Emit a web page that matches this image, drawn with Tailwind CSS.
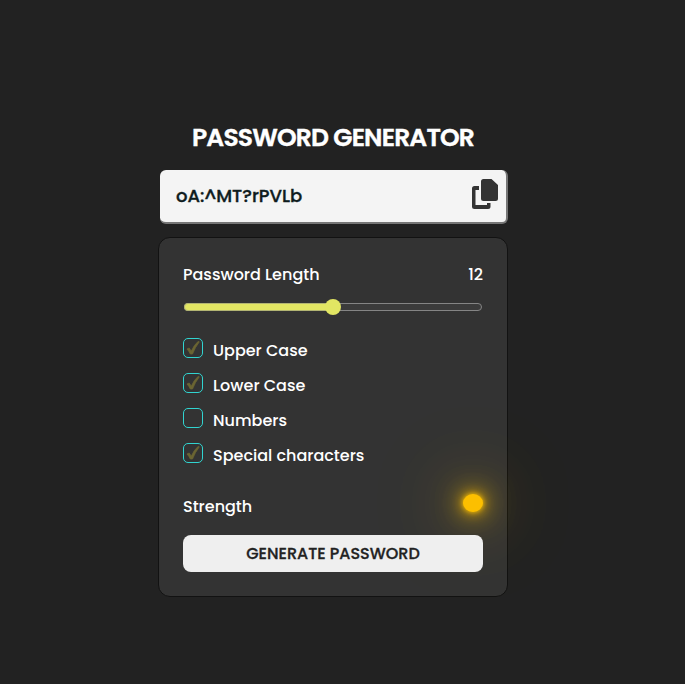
<!DOCTYPE html>
<html lang="en">
<head>
<meta charset="utf-8">
<title>Password Generator</title>
<script src="https://cdn.jsdelivr.net/npm/@tailwindcss/browser@4"></script>
</head>
<body class="h-[684px] overflow-hidden bg-[#222222] font-[Poppins,Inter,sans-serif] text-base font-medium text-white">
<main class="ml-[158px] flex w-[350px] flex-col pt-[120px]">
  <h1 class="h-9 text-center text-[25px] leading-9 font-semibold tracking-[-0.82px] whitespace-nowrap [-webkit-text-stroke:0.4px_white]">PASSWORD GENERATOR</h1>
  <div class="mt-[14px] ml-0.5 flex h-[54px] w-[348px] justify-between rounded-md border-r-2 border-b-2 border-[#767676] bg-[#f4f4f4] pr-2 pl-4 text-[#0f1c1e]">
    <span class="text-[18px] leading-[52px] font-medium [-webkit-text-stroke:0.35px_#0f1c1e]">oA:^MT?rPVLb</span>
    <svg class="mt-[9px] h-[30px] w-[27px]" viewBox="0 0 27 30" fill="#333333"><path d="M12 0H20.5L27 6V19.5Q27 22 24.5 22H12.5Q10 22 10 19.5V2.5Q10 0 12.5 0Z"/><path d="M8 7H3.5Q1 7 1 9.5V27.5Q1 30 3.5 30H17Q19.5 30 19.5 27.5V24H16V26H4.5V11H8Z"/></svg>
  </div>
  <section class="mt-[13px] h-[360px] rounded-xl border border-[#121212] bg-[#333333] px-6 pt-6">
    <div class="flex h-6 justify-between leading-[26px]"><span>Password Length</span><span>12</span></div>
    <div class="mt-[13px] flex h-4 items-center px-px">
      <div class="relative h-2 w-[298px] rounded-full border border-[#858585] bg-[#3b3b3b]">
        <div class="-mt-px -ml-px h-2 w-[149px] rounded-l-full border border-r-0 border-[#b3b573] bg-[#e2e663]"></div>
        <div class="absolute top-[-5px] left-[140px] size-4 rounded-full bg-[#e2e663]"></div>
      </div>
    </div>
    <div class="mt-[21px] flex flex-col gap-[11px]">
      <label class="flex h-6 gap-[10px]"><span class="mt-0.5 flex size-5 items-center justify-center rounded-[5px] border border-[#31d4d0]"><svg class="size-[14px]" viewBox="0 0 14 14" fill="#6b6532" stroke="#6b6532" stroke-width=".8"><path d="M1 8L3.2 7L5.3 10.2Q8 4 12 .5L13.3 .8Q9 6.5 6.5 13H4.3Q3 10 1 8Z"/></svg></span><span class="pt-[3px] leading-6">Upper Case</span></label>
      <label class="flex h-6 gap-[10px]"><span class="mt-0.5 flex size-5 items-center justify-center rounded-[5px] border border-[#31d4d0]"><svg class="size-[14px]" viewBox="0 0 14 14" fill="#6b6532" stroke="#6b6532" stroke-width=".8"><path d="M1 8L3.2 7L5.3 10.2Q8 4 12 .5L13.3 .8Q9 6.5 6.5 13H4.3Q3 10 1 8Z"/></svg></span><span class="pt-[3px] leading-6">Lower Case</span></label>
      <label class="flex h-6 gap-[10px]"><span class="mt-0.5 size-5 rounded-[5px] border border-[#31d4d0]"></span><span class="pt-[3px] leading-6">Numbers</span></label>
      <label class="flex h-6 gap-[10px]"><span class="mt-0.5 flex size-5 items-center justify-center rounded-[5px] border border-[#31d4d0]"><svg class="size-[14px]" viewBox="0 0 14 14" fill="#6b6532" stroke="#6b6532" stroke-width=".8"><path d="M1 8L3.2 7L5.3 10.2Q8 4 12 .5L13.3 .8Q9 6.5 6.5 13H4.3Q3 10 1 8Z"/></svg></span><span class="pt-[3px] leading-6">Special characters</span></label>
    </div>
    <div class="mt-[29px] flex h-6 justify-between leading-[26px]"><span>Strength</span><span class="h-[18px] w-5 rounded-[50%] bg-[#fcbf00] shadow-[0_0_5px_#fcbf00,0_0_15px_#fcbf00,0_0_30px_#fcbf00,0_0_60px_#fcbf00,0_0_90px_#fcbf00]"></span></div>
    <button class="relative mt-[17px] block h-[37px] w-[300px] rounded-lg bg-[#efefef] text-base font-medium text-[#222222] [-webkit-text-stroke:0.3px_#222222]">GENERATE PASSWORD</button>
  </section>
</main>
</body>
</html>
